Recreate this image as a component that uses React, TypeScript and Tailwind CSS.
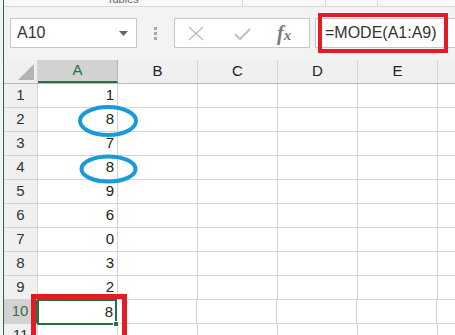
import React from 'react'

const values = ['1', '8', '7', '8', '9', '6', '0', '3', '2', '8']
const cols = ['A', 'B', 'C', 'D', 'E', '']

export default function App() {
  return (
    <div
      className="relative w-[455px] h-[335px] overflow-hidden bg-[#f3f3f3] flex text-[#222]"
      style={{ fontFamily: '"Liberation Sans", Arial, sans-serif' }}
    >
      <div className="w-[3px] shrink-0 bg-[#f3f3f3]" />
      <div className="flex-1 flex flex-col border-l border-[#217346] min-w-0">
        {/* ribbon bottom strip */}
        <div className="h-[7px] shrink-0 border-b border-[#d9d9d9] bg-[#f8f8f8] relative overflow-hidden">
          <span className="absolute left-[103px] top-[-9px] text-[11px] text-[#666]">Tables</span>
          <div className="absolute left-[238px] top-0 h-[6px] border-l border-[#d9d9d9]" />
          <div className="absolute left-[321px] top-0 h-[6px] border-l border-[#d9d9d9]" />
          <div className="absolute left-[373px] top-0 h-[6px] border-l border-[#d9d9d9]" />
        </div>

        {/* formula bar */}
        <div className="h-[53px] shrink-0 flex items-start pt-[11px]">
          <div className="ml-[6px] w-[127px] h-[30px] bg-white border border-[#c6c6c6] flex items-center justify-between pl-[6px] pr-[8px]">
            <span className="text-[16px] text-[#333]">A10</span>
            <svg width="9" height="5" viewBox="0 0 9 5">
              <path d="M0 0 L9 0 L4.5 5 Z" fill="#666" />
            </svg>
          </div>
          <div className="w-[37px] h-[30px] flex flex-col items-center justify-center gap-[2px]">
            <span className="w-[3px] h-[3px] bg-[#a8a8a8]" />
            <span className="w-[3px] h-[3px] bg-[#a8a8a8]" />
            <span className="w-[3px] h-[3px] bg-[#a8a8a8]" />
          </div>
          <div className="w-[136px] h-[30px] bg-white border border-[#c6c6c6] flex items-center">
            <svg width="16" height="15" viewBox="0 0 16 15" className="ml-[13px]">
              <path d="M1 1 L15 14 M15 1 L1 14" stroke="#c2c2c2" strokeWidth="1.6" fill="none" />
            </svg>
            <svg width="17" height="12" viewBox="0 0 17 12" className="ml-[30px] mt-[2px]">
              <path d="M1 6 L6 11 L16 1" stroke="#c2c2c2" strokeWidth="2.2" fill="none" />
            </svg>
            <span
              className="ml-[26px] text-[20px] italic font-bold text-[#7a7a7a]"
              style={{ fontFamily: '"Liberation Serif", "Times New Roman", serif' }}
            >
              f<span className="text-[15px]">x</span>
            </span>
          </div>
          <div className="ml-[5px] flex-1 h-[30px] bg-white border border-r-0 border-[#c6c6c6] flex items-center pl-[9px]">
            <span className="text-[16px] text-[#333]">=MODE(A1:A9)</span>
          </div>
        </div>

        {/* grid */}
        <div className="flex-1 bg-white">
          <div className="flex h-[24px] bg-[#f0f0f0] border-b border-[#b8b8b8]">
            <div className="w-[34px] shrink-0 border-r border-[#d4d4d4] flex items-end justify-end pr-[3px] pb-[3px]">
              <svg width="16" height="16" viewBox="0 0 16 16">
                <path d="M16 0 L16 16 L0 16 Z" fill="#b4b4b4" />
              </svg>
            </div>
            {cols.map((c, ci) => (
              <div
                key={ci}
                className={
                  c === 'A'
                    ? 'w-[80px] shrink-0 bg-[#d2d2d2] border-r border-[#b8b8b8] border-b-2 border-b-[#217346] flex items-center justify-center text-[15px] text-[#217346]'
                    : 'w-[80px] shrink-0 border-r border-[#d4d4d4] flex items-center justify-center text-[15px] text-[#222]'
                }
              >
                {c}
              </div>
            ))}
          </div>
          {[...values, ''].map((v, i) => {
            const row = i + 1
            const sel = row === 10
            return (
              <div key={row} className="flex h-[24px]">
                <div
                  className={
                    sel
                      ? 'w-[34px] shrink-0 bg-[#d2d2d2] border-r-2 border-[#217346] border-b border-b-[#d4d4d4] flex items-center justify-center text-[15px] text-[#3c6a50]'
                      : 'w-[34px] shrink-0 bg-[#f0f0f0] border-r border-b border-[#d4d4d4] flex items-center justify-center text-[15px] text-[#333]'
                  }
                >
                  {row}
                </div>
                {cols.map((c, ci) =>
                  c === 'A' ? (
                    <div
                      key={ci}
                      className={
                        sel
                          ? 'relative w-[80px] shrink-0 border-2 border-[#217346] -ml-[1px] -mt-[1px] h-[26px] flex items-center justify-end pr-[2px] text-[15px] bg-white z-10'
                          : 'w-[80px] shrink-0 border-r border-b border-[#d4d4d4] flex items-center justify-end pr-[3px] text-[15px]'
                      }
                    >
                      {v}
                      {sel && <span className="absolute right-[-4px] bottom-[-4px] w-[6px] h-[6px] bg-[#217346] border border-white" />}
                    </div>
                  ) : (
                    <div key={ci} className="w-[80px] shrink-0 border-r border-b border-[#d4d4d4]" />
                  )
                )}
              </div>
            )
          })}
        </div>
      </div>

      {/* annotations */}
      <svg className="absolute left-0 top-0 pointer-events-none" width="455" height="335">
        <ellipse cx="108" cy="121" rx="28" ry="14" stroke="#1a9ad8" strokeWidth="4" fill="none" />
        <ellipse cx="108.5" cy="169" rx="27" ry="12.5" stroke="#1a9ad8" strokeWidth="4" fill="none" />
      </svg>
      <div className="absolute left-[318px] top-[13px] w-[130px] h-[40px] border-4 border-[#e31b23]" />
      <div className="absolute left-[31px] top-[294px] w-[96px] h-[50px] border-[5px] border-[#e31b23]" />
    </div>
  )
}
